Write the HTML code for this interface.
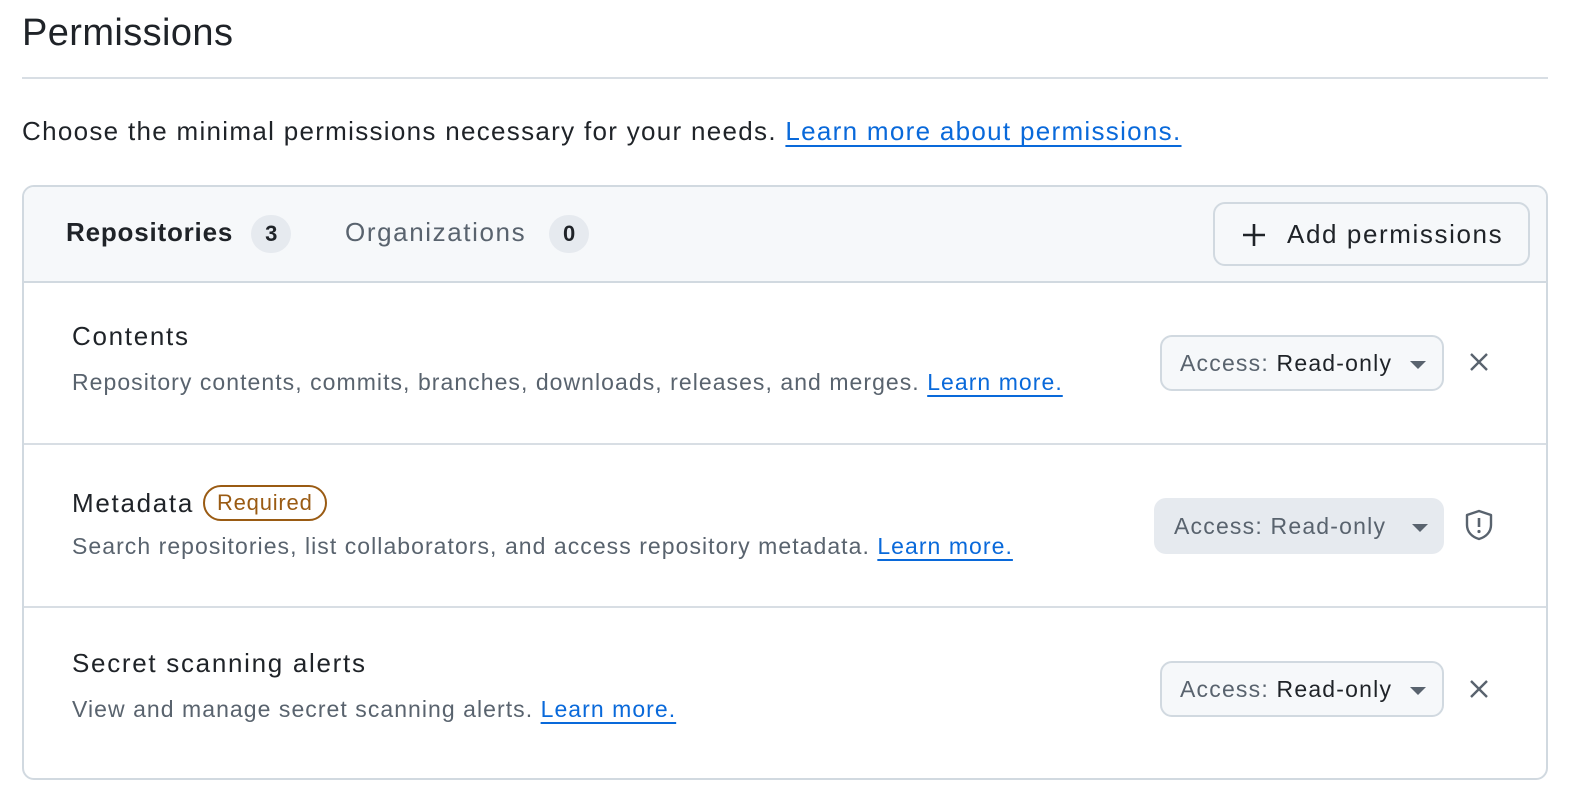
<!DOCTYPE html>
<html><head><style>
*{box-sizing:border-box;margin:0;padding:0}
body{width:1578px;height:808px;background:#fff;font-family:"Liberation Sans",sans-serif;color:#1f2328;position:relative;overflow:hidden}
.a{position:absolute;white-space:nowrap}
h1{position:absolute;left:22px;top:12px;font-size:38px;font-weight:400;letter-spacing:0.4px}
.hr{position:absolute;left:22px;top:77px;width:1526px;height:2px;background:#d8dee4}
.lnk{color:#0969da;text-decoration:underline;text-underline-offset:5px;text-decoration-thickness:2px}
.box{position:absolute;left:22px;top:185px;width:1526px;height:595px;border:2px solid #d1d9e0;border-radius:12px;overflow:hidden}
.hd{position:absolute;left:0;top:0;width:100%;height:96px;background:#f6f8fa;border-bottom:2px solid #d1d9e0}
.cnt{display:inline-block;background:#e6eaef;border-radius:20px;font-size:22px;font-weight:700;padding:6px 14px;vertical-align:middle;color:#1f2328;letter-spacing:0}
.row{position:absolute;left:0;width:100%;border-bottom:2px solid #d8dee4}
.t{font-size:26px;color:#1f2328;letter-spacing:1.7px}
.d{font-size:23px;color:#59636e;letter-spacing:1.05px}
.sel{position:absolute;height:56px;border:2px solid #d1d9e0;border-radius:12px;background:#f6f8fa;font-size:23px;color:#59636e;padding:13px 0 0 18px;letter-spacing:1.2px}
.sel b{font-weight:400;color:#1f2328}
.car{position:absolute;right:16px;top:24px;width:0;height:0;border-left:8px solid transparent;border-right:8px solid transparent;border-top:8px solid #59636e}
</style></head><body>
<h1>Permissions</h1>
<div class="hr"></div>
<div class="a" style="left:22px;top:116px;font-size:26px;letter-spacing:1.3px">Choose the minimal permissions necessary for your needs. <span class="lnk">Learn more about permissions.</span></div>
<div class="box">
 <div class="hd">
  <div class="a" style="left:42px;top:28px;font-size:26px;font-weight:700;letter-spacing:0.8px">Repositories <span class="cnt" style="margin-left:10px">3</span></div>
  <div class="a" style="left:321px;top:28px;font-size:26px;color:#59636e;letter-spacing:1.6px">Organizations <span class="cnt" style="margin-left:14px">0</span></div>
  <div class="a" style="left:1189px;top:15px;width:317px;height:64px;border:2px solid #d1d9e0;border-radius:12px;background:#f6f8fa;font-size:26px;padding:15px 0 0 26px;letter-spacing:1.6px">
   <svg width="26" height="26" viewBox="0 0 26 26" style="position:absolute;left:26px;top:18px"><path d="M13 2v22M2 13h22" stroke="#1f2328" stroke-width="2.6"/></svg>
   <span style="margin-left:46px">Add permissions</span></div>
 </div>
 <div class="row" style="top:96px;height:162px">
  <div class="a t" style="left:48px;top:38px">Contents</div>
  <div class="a d" style="left:48px;top:86px">Repository contents, commits, branches, downloads, releases, and merges. <span class="lnk">Learn more.</span></div>
  <div class="sel" style="left:1136px;top:52px;width:284px">Access: <b>Read-only</b><div class="car"></div></div>
  <svg class="a" style="left:1444px;top:68px" width="22" height="22" viewBox="0 0 22 22"><path d="M3 3l16 16M19 3L3 19" stroke="#59636e" stroke-width="2.4"/></svg>
 </div>
 <div class="row" style="top:258px;height:163px">
  <div class="a t" style="left:48px;top:40px">Metadata <span style="display:inline-block;border:2px solid #9a5b13;color:#9a5b13;border-radius:20px;font-size:22px;padding:3px 12px;margin-left:0;vertical-align:2px;letter-spacing:0.8px">Required</span></div>
  <div class="a d" style="left:48px;top:88px">Search repositories, list collaborators, and access repository metadata. <span class="lnk">Learn more.</span></div>
  <div class="sel" style="left:1130px;top:53px;width:290px;border:none;background:#e6eaef;padding:15px 0 0 20px">Access: Read-only<div class="car" style="top:26px"></div></div>
  <svg class="a" style="left:1440px;top:64px" width="30" height="32" viewBox="0 0 30 32"><path d="M15 2L27 6v10c0 7-5 12-12 14C8 28 3 23 3 16V6z" fill="none" stroke="#59636e" stroke-width="2.4" stroke-linejoin="round"/><path d="M15 9v9" stroke="#59636e" stroke-width="2.6"/><circle cx="15" cy="22.5" r="1.6" fill="#59636e"/></svg>
 </div>
 <div class="row" style="top:421px;height:174px;border:none">
  <div class="a t" style="left:48px;top:40px">Secret scanning alerts</div>
  <div class="a d" style="left:48px;top:88px">View and manage secret scanning alerts. <span class="lnk">Learn more.</span></div>
  <div class="sel" style="left:1136px;top:53px;width:284px">Access: <b>Read-only</b><div class="car"></div></div>
  <svg class="a" style="left:1444px;top:70px" width="22" height="22" viewBox="0 0 22 22"><path d="M3 3l16 16M19 3L3 19" stroke="#59636e" stroke-width="2.4"/></svg>
 </div>
</div>
</body></html>
